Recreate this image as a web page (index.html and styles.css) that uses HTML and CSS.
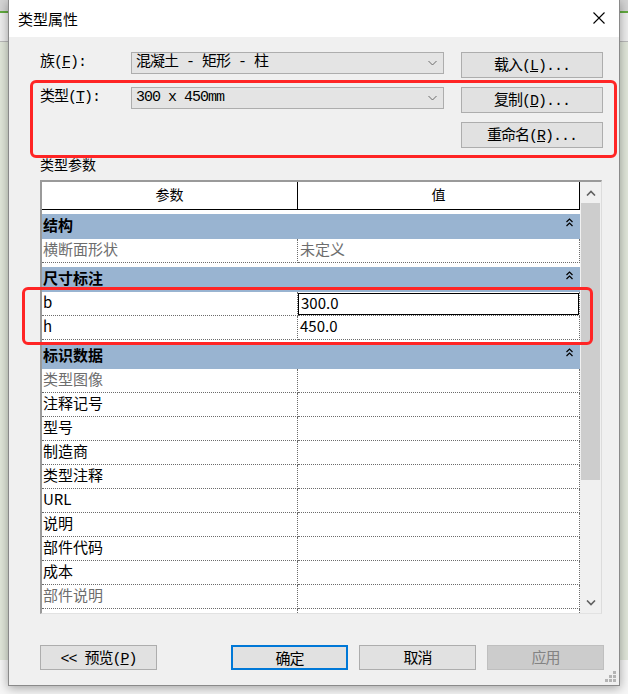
FILE: index.html
```html
<!DOCTYPE html>
<html lang="zh-CN">
<head>
    <meta charset="UTF-8">
    <meta name="viewport" content="width=device-width, initial-scale=1.0">
    <title>类型属性</title>
    <link rel="stylesheet" href="styles.css">
</head>
<body>
    <div class="dialog">
        <div class="titlebar">
            <span class="title">类型属性</span>
            <svg class="close" width="12" height="12" viewBox="0 0 12 12">
                <path d="M0.5 0.5 L11.5 11.5 M11.5 0.5 L0.5 11.5" stroke="#000" stroke-width="1.1" fill="none"/>
            </svg>
        </div>

        <div class="content">
            <div class="form">
                <div class="label">族(<u>F</u>):</div>
                <div class="combo">
                    <span>混凝土 - 矩形 - 柱</span>
                    <svg width="9" height="6" viewBox="0 0 9 6"><path d="M0.5 1 L4.5 5 L8.5 1" stroke="#6a6a6a" fill="none"/></svg>
                </div>
                <button class="btn btn-side">载入(<u>L</u>)...</button>

                <div class="label">类型(<u>T</u>):</div>
                <div class="combo">
                    <span>300 x 450mm</span>
                    <svg width="9" height="6" viewBox="0 0 9 6"><path d="M0.5 1 L4.5 5 L8.5 1" stroke="#6a6a6a" fill="none"/></svg>
                </div>
                <button class="btn btn-side">复制(<u>D</u>)...</button>

                <div></div>
                <div></div>
                <button class="btn btn-side">重命名(<u>R</u>)...</button>
            </div>

            <div class="section-label">类型参数</div>

            <div class="grid-box">
                <div class="grid">
                    <div class="grid-head">
                        <div class="hcell">参数</div>
                        <div class="hcell">值</div>
                    </div>

                    <div class="group">结构<svg class="fold" width="7" height="9" viewBox="0 0 7 9"><path d="M0.5 4 L3.5 1 L6.5 4 M0.5 8 L3.5 5 L6.5 8" stroke="#000" stroke-width="1.2" fill="none"/></svg></div>
                    <div class="row dim"><div class="cell">横断面形状</div><div class="cell">未定义</div></div>

                    <div class="group">尺寸标注<svg class="fold" width="7" height="9" viewBox="0 0 7 9"><path d="M0.5 4 L3.5 1 L6.5 4 M0.5 8 L3.5 5 L6.5 8" stroke="#000" stroke-width="1.2" fill="none"/></svg></div>
                    <div class="row"><div class="cell">b</div><div class="cell"><span class="edit">300.0</span></div></div>
                    <div class="row"><div class="cell">h</div><div class="cell">450.0</div></div>

                    <div class="group">标识数据<svg class="fold" width="7" height="9" viewBox="0 0 7 9"><path d="M0.5 4 L3.5 1 L6.5 4 M0.5 8 L3.5 5 L6.5 8" stroke="#000" stroke-width="1.2" fill="none"/></svg></div>
                    <div class="row dim"><div class="cell">类型图像</div><div class="cell"></div></div>
                    <div class="row"><div class="cell">注释记号</div><div class="cell"></div></div>
                    <div class="row"><div class="cell">型号</div><div class="cell"></div></div>
                    <div class="row"><div class="cell">制造商</div><div class="cell"></div></div>
                    <div class="row"><div class="cell">类型注释</div><div class="cell"></div></div>
                    <div class="row"><div class="cell">URL</div><div class="cell"></div></div>
                    <div class="row"><div class="cell">说明</div><div class="cell"></div></div>
                    <div class="row"><div class="cell">部件代码</div><div class="cell"></div></div>
                    <div class="row"><div class="cell">成本</div><div class="cell"></div></div>
                    <div class="row dim"><div class="cell">部件说明</div><div class="cell"></div></div>
                    <div class="row"><div class="cell"></div><div class="cell"></div></div>
                </div>

                <div class="scrollbar">
                    <div class="arrow">
                        <svg width="10" height="6" viewBox="0 0 10 6"><path d="M1 5.5 L5 1.5 L9 5.5" stroke="#606060" stroke-width="1.6" fill="none"/></svg>
                    </div>
                    <div class="thumb"></div>
                    <div class="arrow arrow-down">
                        <svg width="10" height="6" viewBox="0 0 10 6"><path d="M1 0.5 L5 4.5 L9 0.5" stroke="#606060" stroke-width="1.6" fill="none"/></svg>
                    </div>
                </div>
            </div>

            <div class="actions">
                <button class="btn">&lt;&lt; 预览(<u>P</u>)</button>
                <div class="actions-right">
                    <button class="btn btn-default">确定</button>
                    <button class="btn">取消</button>
                    <button class="btn btn-disabled">应用</button>
                </div>
            </div>
        </div>

        <!-- red annotation frames drawn over the dialog -->
        <div class="mark mark-type"></div>
        <div class="mark mark-dim"></div>

        <svg class="grip" width="12" height="12" viewBox="0 0 12 12" fill="#b4b4b4">
            <rect x="8" y="0" width="3" height="3"/>
            <rect x="4" y="4" width="3" height="3"/>
            <rect x="8" y="4" width="3" height="3"/>
            <rect x="0" y="8" width="3" height="3"/>
            <rect x="4" y="8" width="3" height="3"/>
            <rect x="8" y="8" width="3" height="3"/>
        </svg>
    </div>
</body>
</html>
```

FILE: styles.css
```css
body {
    margin: 0;
    font-family: "Noto Sans CJK SC", "Liberation Sans", sans-serif;
    color: #000;
    background: linear-gradient(to bottom,
        #d4d4d4 0, #d4d4d4 11px,
        #62ab3f 11px, #62ab3f 13px,
        #eeeeee 13px, #eeeeee 41px,
        #b9b9b9 41px, #b9b9b9 42px,
        #e1e7da 42px, #e1e7da 660px,
        #f6f6f6 660px);
    min-height: 694px;
}

.dialog {
    position: relative;
    margin-left: 8px;
    width: 610px;
    height: 685px;
    border: 1px solid #8a8a8a;
    border-top: none;
    background: #f0f0f0;
    box-shadow: 0 2px 10px rgba(0, 0, 0, 0.35);
}

.titlebar {
    height: 37px;
    background: #fff;
    display: flex;
    align-items: center;
    justify-content: space-between;
    padding: 0 14px 0 9px;
}

.title {
    font-size: 15px;
    line-height: 20px;
}

.close {
    display: block;
    margin-top: -1px;
}

.content {
    padding: 15px 15px 0 31px;
}

/* top form */
.form {
    display: grid;
    grid-template-columns: 91px 313px 159px;
    grid-auto-rows: 26px;
    row-gap: 9px;
}

.label {
    font-family: "Liberation Mono", "Noto Sans CJK SC", monospace;
    font-size: 15px;
    letter-spacing: -1px;
    line-height: 22px;
}

.combo {
    height: 22px;
    box-sizing: border-box;
    background: #e4e4e4;
    border: 1px solid #adadad;
    display: flex;
    align-items: center;
    justify-content: space-between;
    padding: 0 6px 0 4px;
    font-family: "Liberation Mono", "Noto Sans CJK SC", monospace;
    font-size: 15px;
    letter-spacing: -1px;
    line-height: 20px;
}

.btn {
    height: 25px;
    width: 117px;
    box-sizing: border-box;
    background: #e1e1e1;
    border: 1px solid #adadad;
    padding: 0 0 2px;
    font-family: "Liberation Mono", "Noto Sans CJK SC", monospace;
    font-size: 15px;
    letter-spacing: -1px;
    color: #000;
}

.btn-side {
    width: 142px;
    height: 26px;
    justify-self: end;
}

.btn-default {
    border: 2px solid #0078d7;
}

.btn-disabled {
    background: #cccccc;
    border-color: #bfbfbf;
    color: #838383;
}

.section-label {
    margin-top: 8px;
    font-size: 14px;
    line-height: 17px;
    margin-bottom: 1px;
}

/* property grid */
.grid-box {
    margin-top: 7px;
    width: 562px;
    height: 434px;
    box-sizing: border-box;
    border-top: 2px solid #9a9a9a;
    border-left: 2px solid #9a9a9a;
    border-right: 1px solid #dcdcdc;
    border-bottom: 1px solid #e2e2e2;
    display: flex;
    overflow: hidden;
}

.grid {
    width: 538px;
    background: #fff;
    overflow: hidden;
}

.grid-head {
    display: grid;
    grid-template-columns: 256px 282px;
    height: 27px;
    border-bottom: 1px solid #000;
}

.hcell {
    border-right: 1px solid #000;
    text-align: center;
    font-size: 14px;
    line-height: 25px;
}

.group {
    margin-top: 4px;
    height: 25px;
    background: #99b4d1;
    font-size: 15px;
    font-weight: bold;
    line-height: 20px;
    padding: 1px 7px 0 1px;
    box-sizing: border-box;
    display: flex;
    justify-content: space-between;
}

.fold {
    margin-top: 3px;
}

.row {
    display: grid;
    grid-template-columns: 256px 282px;
    height: 24px;
}

.cell {
    border-right: 1px dotted #6c6c6c;
    border-bottom: 1px dotted #6c6c6c;
    padding-left: 1px;
    font-size: 15px;
    line-height: 20px;
    white-space: nowrap;
}

.row .cell + .cell {
    padding-left: 2px;
}

.dim .cell {
    color: #6d6d6d;
}

.edit {
    display: block;
    height: 22px;
    margin: 1px 0 0 -2px;
    padding-left: 2px;
    border: 1px solid #000;
    box-sizing: border-box;
    line-height: 18px;
}

.scrollbar {
    width: 21px;
    background: #f0f0f0;
    display: flex;
    flex-direction: column;
}

.arrow {
    height: 21px;
    display: flex;
    align-items: center;
    justify-content: center;
}

.arrow-down {
    margin-top: auto;
}

.thumb {
    height: 277px;
    margin: 0 1px;
    background: #cdcdcd;
}

/* bottom buttons */
.actions {
    margin-top: 31px;
    display: flex;
    justify-content: space-between;
}

.actions-right {
    display: flex;
    gap: 11px;
}

.mark {
    position: absolute;
    border: 3px solid #ff2525;
    border-radius: 6px;
    box-sizing: border-box;
}

.mark-type {
    left: 21px;
    top: 80px;
    width: 587px;
    height: 78px;
}

.mark-dim {
    left: 13px;
    top: 287px;
    width: 571px;
    height: 58px;
}

.grip {
    position: absolute;
    right: 2px;
    bottom: 2px;
}
```
